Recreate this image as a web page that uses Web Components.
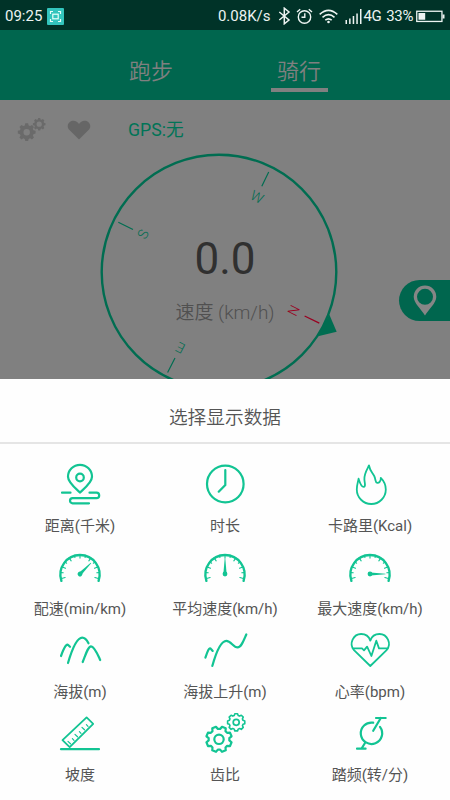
<!DOCTYPE html>
<html lang="zh-CN">
<head>
<meta charset="utf-8">
<title>骑行</title>
<style>
html,body{margin:0;height:100%}
body{font-family:Roboto,"Noto Sans CJK SC",sans-serif;background:#fff;overflow:hidden}
</style>
</head>
<body>
<ride-app></ride-app>
<script>
const define = (name, css, html) => customElements.define(name, class extends HTMLElement {
  connectedCallback() {
    if (this.shadowRoot) return;
    const root = this.attachShadow({ mode: 'open' });
    root.innerHTML = `<style>*{box-sizing:border-box}svg{display:block}${css}</style>` + (typeof html === 'function' ? html(this) : html);
  }
});

/* closed cog outline with rounded teeth */
function cog(cx, cy, ro, ri, n, phase = 0) {
  const p = [], step = 2 * Math.PI / n;
  for (let i = 0; i < n; i++) {
    for (const [f, r] of [[-.36, ri], [-.2, ro], [.2, ro], [.36, ri]]) {
      const a = (i + f) * step + phase;
      p.push((cx + r * Math.cos(a)).toFixed(2) + ' ' + (cy + r * Math.sin(a)).toFixed(2));
    }
  }
  return 'M' + p.join('L') + 'Z';
}

function gauge(deg) {
  let ticks = '';
  for (let i = 0; i <= 12; i++) {
    const a = (-105 + i * 17.5) * Math.PI / 180, r = i % 2 ? 16.8 : 15.4;
    ticks += `M${(25 + 19 * Math.sin(a)).toFixed(2)} ${(30.5 - 19 * Math.cos(a)).toFixed(2)}L${(25 + r * Math.sin(a)).toFixed(2)} ${(30.5 - r * Math.cos(a)).toFixed(2)}`;
  }
  return `<path stroke-width="2.4" d="M6.4 37.8A19.6 19.6 0 1 1 43.6 37.8"/><path stroke-width="1.1" d="${ticks}"/>
  <g transform="rotate(${deg} 25 31)" fill="#12c493" stroke="none"><circle cx="25" cy="31" r="2.4"/><path d="M23.4 30.5L24.7 15.5h.6L26.6 30.5Z"/></g>`;
}

const icons = {
  distance: '<path d="M25 32.5C20.5 28.4 13 22.6 13 16.8A12 12 0 0 1 37 16.8C37 22.6 29.5 28.4 25 32.5Z"/><circle cx="25" cy="17.5" r="3.8"/><path d="M7 32.7H15.5M34.5 32.7H41.5A2.7 2.7 0 0 1 41.5 38.1H17.6A2.6 2.6 0 0 0 17.6 43.3H34"/>',
  time: '<circle cx="25.3" cy="24" r="18.3"/><path d="M25.3 10V25L18.7 31.7"/>',
  calories: '<path stroke-width="1.8" stroke-linejoin="round" d="M24 5.5C22 9.5 18.9 14 19.4 19.5C19.8 24.5 21 26.4 18.9 26.9C16 27.3 14.8 22.5 13.6 18.7C12.8 22.5 11.8 25.3 11.8 29.5A14.5 14.5 0 0 0 40.8 29.5C40.8 25.5 39.3 21.4 35.8 17.9C36 21 34.2 23.1 32.2 22.9C30.1 22.6 30.9 19.5 29.2 16C27.7 12.7 24.9 11 24 5.5Z"/>',
  pace: gauge(45), average: gauge(0), maximum: gauge(90),
  altitude: '<path d="M6 30Q11 16.4 13.2 19.1L15 20.8M13 37C16.5 25 21.5 11.6 27.2 11.6C30 11.6 32 14.3 33.5 17.3M27.7 36C31 27.7 33.2 20.3 36 20.3C39.5 20.3 42.7 28.5 45.2 34"/>',
  ascent: '<path d="M5.4 31.7C7.2 26.5 9 20.5 11 23L12.7 24.9M12.3 40C15.5 28.5 20.3 14.8 26.3 14.8C31 14.8 33.2 21.4 37.6 21.4C41.3 21.4 43.7 14.4 46.3 8.5"/>',
  pulse: '<path stroke-width="1.8" stroke-linejoin="round" d="M25.3 40L9 24.1C3.5 17.7 8.4 8 16.1 8C20.6 8 24 10.7 25.3 14.6C26.6 10.7 30 8 34.5 8C42.2 8 47.1 17.7 41.6 24.1ZM7.7 22.4H17L19 24.3L22.1 20.6L26.4 30L31.3 14.7L34 22.4H43"/>',
  slope: '<path stroke-width="1.8" stroke-linejoin="round" d="M7.5 31.2L31.6 8.4L38.2 14.8L14.7 38.2Z"/><path stroke-width="1.2" d="M15.5 34.8L13 32.4M19 31.3L17.4 29.7M22.5 27.8L20 25.4M26 24.3L24.4 22.7M29.5 20.8L27 18.4M33 17.3L31.4 15.7"/><path d="M6 40.2H44"/>',
  ratio: `<path stroke-linejoin="round" d="${cog(19, 30.3, 12.9, 10.4, 8, Math.PI / 8)}"/><circle cx="19" cy="30.3" r="4.7"/><path stroke-width="1.6" stroke-linejoin="round" d="${cog(36.2, 13.3, 8.7, 7.1, 8)}"/><circle stroke-width="1.7" cx="36.2" cy="13.3" r="3"/>`,
  cadence: '<path stroke-width="2.2" d="M28.2 13.7A10.7 10.7 0 1 0 35 17.8M31 9H40.7M35.8 9L28.2 21.8M12 39.7H20.6M16.6 39.5L20.3 33.5"/>'
};

define('status-bar', `:host{display:flex;height:30px;background:#003328;color:#edf4f2;align-items:center;padding:2px 5px 0;font-size:15px;line-height:28px}
.shot{margin-left:5px;margin-right:auto}.net{margin-right:8px}.bt{margin-right:5px}.alarm{margin-right:6px}.wifi{margin-right:7px}.four{letter-spacing:-.4px;margin-right:5px}.pct{margin-right:3px;letter-spacing:-.4px}`,
`<span>09:25</span>
<svg class="shot" width="17" height="17" viewBox="0 0 17 17"><rect width="17" height="17" rx="1" fill="#33c5bd"/><g fill="none" stroke="#e8fffb" stroke-width="1.2"><path d="M3.5 6V3.5H6M11 3.5h2.5V6M13.5 11v2.5H11M6 13.5H3.5V11"/><rect x="5.8" y="6.2" width="5.4" height="4.6"/></g></svg>
<span class="net">0.08K/s</span>
<svg class="bt" width="13" height="18" viewBox="0 0 13 18"><path d="M1.3 5L11 13L6.3 16.8V1.2L11 5L1.3 13" fill="none" stroke="#edf4f2" stroke-width="1.5"/></svg>
<svg class="alarm" width="17" height="17" viewBox="0 0 17 17" fill="none" stroke="#edf4f2" stroke-width="1.4"><circle cx="8.5" cy="9" r="6.2"/><path d="M8.8 5.3V9.3H5.5M1 4L4.2 1.2M16 4L12.8 1.2"/></svg>
<svg class="wifi" width="19" height="15" viewBox="0 0 19 15" fill="none" stroke="#edf4f2" stroke-width="1.6"><path d="M.7 5.3Q9.5-2.7 18.3 5.3M3.5 8.3Q9.5 3 15.5 8.3M6.3 11.1Q9.5 8.5 12.7 11.1"/><circle cx="9.5" cy="13" r="1.3" fill="#edf4f2" stroke="none"/></svg>
<svg width="18" height="16" viewBox="0 0 18 16" fill="#edf4f2"><path d="M.5 12h1.5v4H.5zM4.1 10.5h1.5V16H4.1zM7.7 8h1.5v8H7.7zM11.3 5.5h1.5V16h-1.5zM15 1h1.5v15H15z"/></svg>
<span class="four">4G</span><span class="pct">33%</span>
<svg width="29" height="13" viewBox="0 0 29 13"><rect x=".75" y="1.25" width="25.2" height="10.2" fill="none" stroke="#edf4f2" stroke-width="1.3"/><path fill="#edf4f2" d="M2.5 3h6.7v6.8H2.5zM26.5 4.5h2v4h-2z"/></svg>`);

define('mode-tab', `:host{display:flex;flex-direction:column;align-items:center;color:#808080;font-size:22px;line-height:30px;font-weight:350}
i{display:block;width:57px;height:4px;margin-top:1px}:host([selected]) i{background:#808080}`, `<slot></slot><i></i>`);

define('mode-tabs', `:host{display:flex;height:70px;background:#00664e;padding:27px 78px 0 78px;justify-content:space-between}mode-tab{width:146px}`,
`<mode-tab>跑步</mode-tab><mode-tab selected>骑行</mode-tab>`);

define('tool-row', `:host{display:flex;align-items:center;height:50px;margin-top:5px;padding-left:17px;color:#007457;font-size:17.7px}
.heart{margin-left:20px;margin-right:37px}span{line-height:30px}`,
`<svg width="30" height="28" viewBox="0 0 30 28"><g fill="#6a6a6a" fill-rule="evenodd"><path d="${cog(9.7, 16.2, 9, 7, 8)}M6.5 16.2a3.2 3.2 0 1 0 6.4 0a3.2 3.2 0 1 0-6.4 0Z"/><path d="${cog(22.2, 8.2, 6.4, 5, 8)}M19.6 8.2a2.6 2.6 0 1 0 5.2 0a2.6 2.6 0 1 0-5.2 0Z"/></g></svg>
<svg class="heart" width="24" height="21" viewBox="0 0 24 21"><path fill="#666" d="M12 19.5L2.2 9.8C-1.7 5.5 2.8-.8 8 1.1C10 1.7 11 2.8 12 4C13 2.8 14 1.7 16 1.1C21.2-.8 25.7 5.5 21.8 9.8Z"/></svg>
<span>GPS:无</span>`);

define('ride-compass', `:host{display:block;height:245px}text{font-family:Roboto,"Noto Sans CJK SC",sans-serif;text-anchor:middle}`, () => {
  const mark = (x, y, a, s, c) => `<text transform="translate(${x} ${y}) rotate(${a})" y="5" font-size="14" font-weight="300" fill="${c}">${s}</text>`;
  return `<svg width="450" height="245" viewBox="0 150 450 245">
<g fill="none" stroke="#006d51" stroke-width="2.4"><circle cx="219" cy="272" r="117.3"/><path stroke-width="1.2" d="M268.7 172L261.8 186.2M118.3 222.2L133 229.5M175 358L167.6 372.5"/><path stroke="#990020" stroke-width="1.3" d="M304.6 316L319.3 323.2"/></g>
<path fill="#006d51" d="M329.3 314.5L336.7 331.7L318 336.3Z"/>
${mark(257, 197, 27, 'W', '#006d51')}${mark(143, 234, -63, 'S', '#006d51')}${mark(180.5, 348, 207, 'E', '#006d51')}${mark(293.7, 310.5, 117, 'N', '#990020')}
<text x="225" y="274" font-size="44" fill="#303030">0.0</text>
<text x="225" y="318.5" font-size="19" fill="#505050" font-weight="350">速度 (km/h)</text></svg>`;
});

define('map-button', `:host{display:block;width:51px;height:41px;border-radius:21px 0 0 21px;background:#00664e}`,
`<svg width="51" height="41" viewBox="0 0 51 41"><path fill="#868686" fill-rule="evenodd" d="M26 35.5C22.5 29.5 14.7 23.3 14.7 16.8A11.3 11.3 0 0 1 37.3 16.8C37.3 23.3 29.5 29.5 26 35.5ZM18 16.8a8 8 0 1 0 16 0a8 8 0 1 0-16 0Z"/></svg>`);

define('metric-item', `:host{display:flex;flex-direction:column;align-items:center;height:83px;color:#555;font-size:15px}
span{line-height:24px;margin-top:4px;white-space:nowrap}`,
  el => `<svg width="50" height="50" viewBox="0 0 50 50" fill="none" stroke="#12c493" stroke-width="2.2" stroke-linecap="round">${icons[el.getAttribute('icon')]}</svg><span><slot></slot></span>`);

define('metric-sheet', `:host{display:block;background:#fefefe;height:421px}
h2{margin:0;height:65px;padding-top:2px;border-bottom:2px solid #e5e5e5;text-align:center;font-size:18.7px;line-height:75px;font-weight:350;color:#555}
div{display:grid;grid-template-columns:repeat(3,145px);justify-content:center;padding-top:16px}`,
`<h2>选择显示数据</h2><div>
<metric-item icon="distance">距离(千米)</metric-item><metric-item icon="time">时长</metric-item><metric-item icon="calories">卡路里(Kcal)</metric-item>
<metric-item icon="pace">配速(min/km)</metric-item><metric-item icon="average">平均速度(km/h)</metric-item><metric-item icon="maximum">最大速度(km/h)</metric-item>
<metric-item icon="altitude">海拔(m)</metric-item><metric-item icon="ascent">海拔上升(m)</metric-item><metric-item icon="pulse">心率(bpm)</metric-item>
<metric-item icon="slope">坡度</metric-item><metric-item icon="ratio">齿比</metric-item><metric-item icon="cadence">踏频(转/分)</metric-item></div>`);

define('ride-app', `:host{display:flex;flex-direction:column;width:450px;height:800px}
main{position:relative;height:379px;overflow:hidden;background:#808080;flex:none}
ride-compass{margin-top:-5px}
map-button{position:absolute;right:0;top:280px}`,
`<main><status-bar></status-bar><mode-tabs></mode-tabs><tool-row></tool-row><ride-compass></ride-compass><map-button></map-button></main><metric-sheet></metric-sheet>`);
</script>
</body>
</html>
